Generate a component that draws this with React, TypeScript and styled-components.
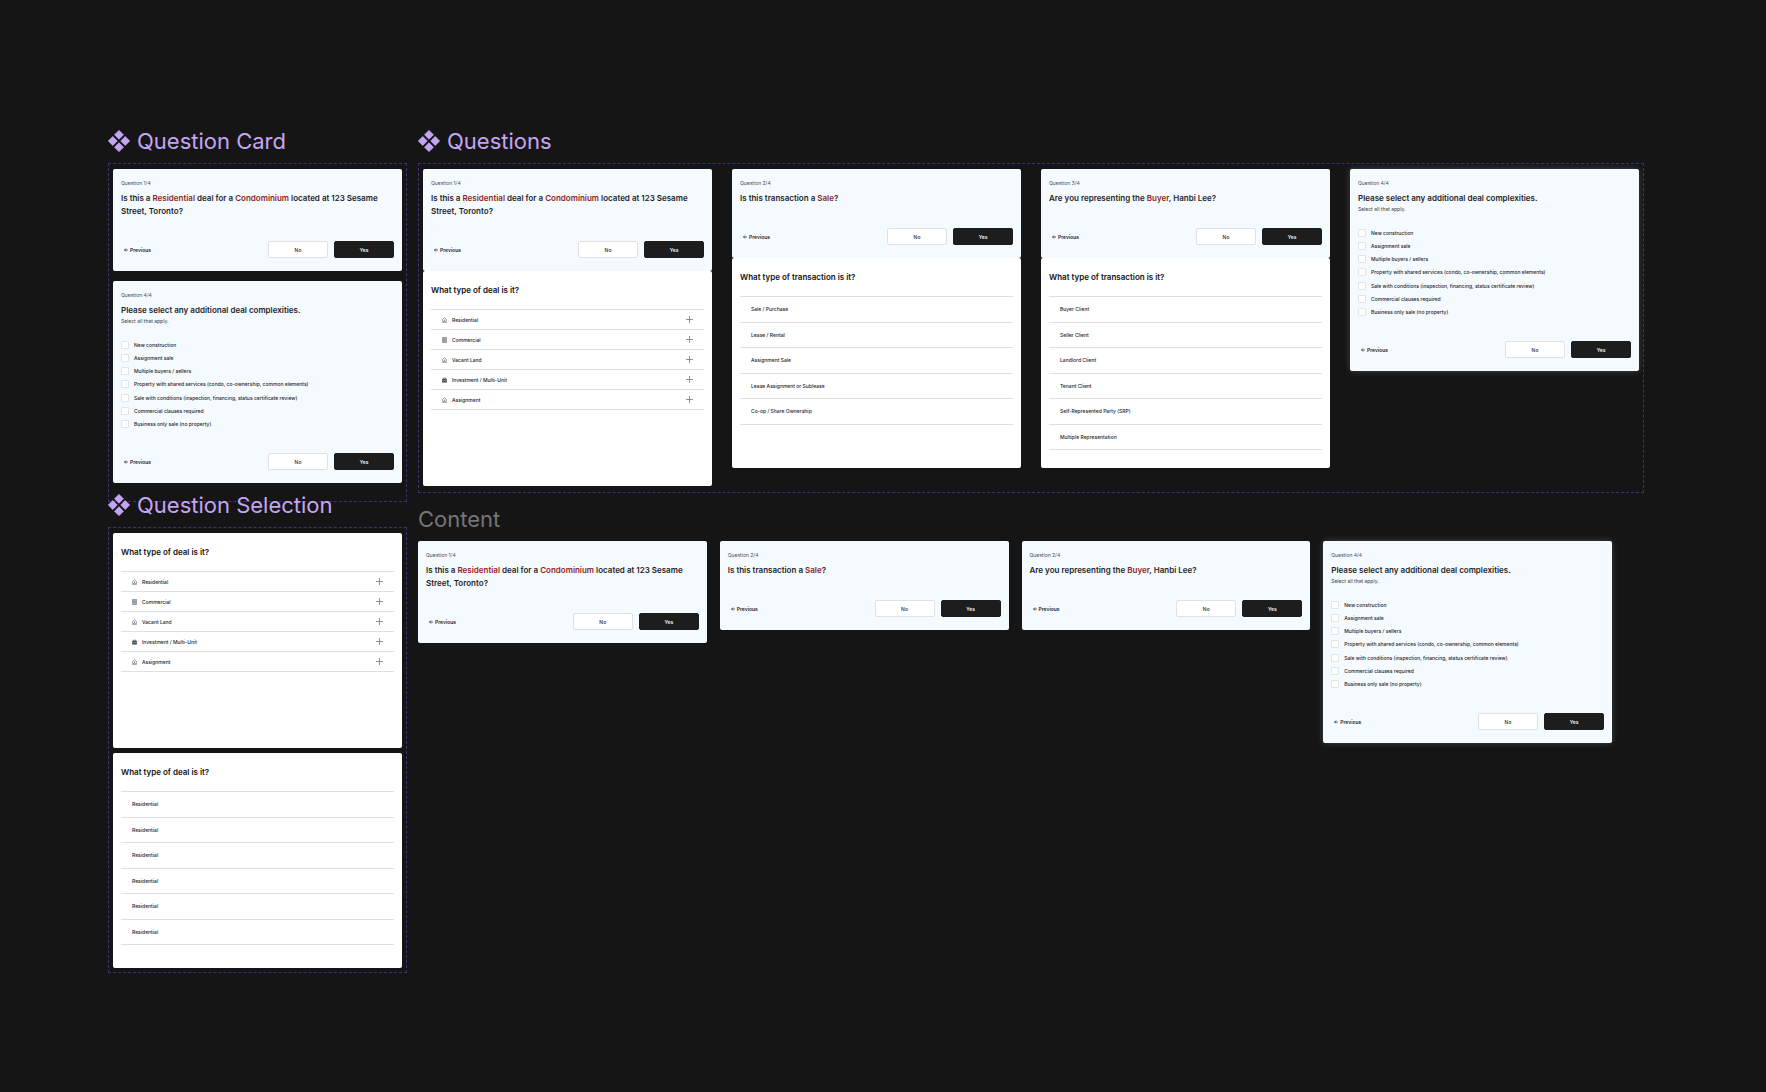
import React, { useId } from "react";
import styled, { createGlobalStyle } from "styled-components";

const GlobalStyle = createGlobalStyle`
  *, *::before, *::after { box-sizing: border-box; }
  body {
    margin: 0;
    background: #151515;
    font-family: Inter, "Liberation Sans", sans-serif;
    color: #1d1d1f;
  }
  button, input { font: inherit; color: inherit; margin: 0; }
`;

const Canvas = styled.main`
  display: grid;
  grid-template-columns: minmax(0, 299fr) minmax(0, 1226fr);
  column-gap: 11px;
  align-items: start;
  min-height: 100vh;
  padding: 127px 122px 40px 108px;
`;

const Column = styled.div`
  display: flex;
  flex-direction: column;
`;

const Section = styled.section<{ $shift?: number }>`
  margin-top: ${(p) => p.$shift ?? 0}px;
`;

const Heading = styled.h2<{ $muted?: boolean }>`
  display: flex;
  align-items: center;
  gap: 7px;
  margin: 0 0 8px;
  font-size: 22px;
  line-height: 28px;
  font-weight: 400;
  color: ${(p) => (p.$muted ? "#757575" : "#c4a5f4")};
`;

const Frame = styled.div<{ $gap: number; $bottom: number }>`
  display: flex;
  flex-direction: column;
  gap: ${(p) => p.$gap}px;
  padding: 5px 4px ${(p) => p.$bottom}px;
  border: 1px dashed #432f78;
`;

const CardGrid = styled.div<{ $gap: number; $inset?: number }>`
  display: grid;
  grid-template-columns: repeat(4, minmax(0, 1fr));
  column-gap: ${(p) => p.$gap}px;
  align-items: start;
  padding-right: ${(p) => p.$inset ?? 0}px;
`;

const Card = styled.article<{ $glow?: boolean }>`
  padding: 10px 8px 13px;
  border-radius: 2px;
  background: #f5faff;
  box-shadow: ${(p) => (p.$glow ? "0 0 6px rgba(255, 255, 255, 0.2)" : "none")};
`;

const Step = styled.p`
  margin: 0 0 5px;
  font-size: 5px;
  line-height: 8px;
  color: #4a4b50;
`;

const Title = styled.h3`
  margin: 0;
  font-size: 8px;
  line-height: 13px;
  font-weight: 600;
`;

const Accent = styled.span`
  color: #8f1d22;
`;

const Hint = styled.p`
  margin: 0;
  font-size: 5px;
  line-height: 8px;
  color: #3a3b40;
`;

const Checklist = styled.ul`
  display: grid;
  grid-auto-rows: 1fr;
  height: 93px;
  margin: 13px 0 0;
  padding: 0;
  list-style: none;
`;

const CheckItem = styled.li`
  display: flex;
  align-items: center;
  gap: 5px;
  font-size: 5px;
  line-height: 8px;
  font-weight: 500;
`;

const Checkbox = styled.input`
  appearance: none;
  width: 8px;
  height: 8px;
  border: 1px solid #e3e4e6;
  border-radius: 1px;
  background: #fff;
  &:checked { background: #1d1d1d; }
`;

const Actions = styled.div<{ $space: number }>`
  display: flex;
  align-items: center;
  gap: 6px;
  margin-top: ${(p) => p.$space}px;
`;

const Action = styled.button<{ $primary?: boolean }>`
  width: 60px;
  height: 17px;
  padding: 0;
  border: 1px solid ${(p) => (p.$primary ? "#1d1d1d" : "#e0e1e4")};
  border-radius: 2px;
  background: ${(p) => (p.$primary ? "#1d1d1d" : "#fff")};
  color: ${(p) => (p.$primary ? "#fff" : "#1d1d1f")};
  font-size: 5px;
  line-height: 8px;
  font-weight: 500;
`;

const Previous = styled.button`
  display: flex;
  align-items: center;
  gap: 2px;
  margin-right: auto;
  padding: 0 3px;
  border: 0;
  background: none;
  font-size: 5px;
  line-height: 8px;
  font-weight: 600;
`;

const Panel = styled.article<{ $height: number }>`
  min-height: ${(p) => p.$height}px;
  padding: 13px 8px 8px;
  border-radius: 2px;
  background: #fff;
`;

const PanelTitle = styled(Title)`
  margin-bottom: 13px;
  color: #101012;
`;

const Options = styled.ul<{ $rows: number; $height: number }>`
  display: grid;
  grid-template-rows: repeat(${(p) => p.$rows}, 1fr);
  height: ${(p) => p.$height}px;
  margin: 0;
  padding: 0;
  list-style: none;
`;

const Option = styled.li`
  display: flex;
  border-bottom: 1px solid #dfe0e2;
  &:first-child { box-shadow: 0 -1px #dfe0e2; }
`;

const OptionButton = styled.button`
  display: flex;
  flex: 1;
  align-items: center;
  gap: 5px;
  padding: 0 11px;
  border: 0;
  background: none;
  text-align: left;
  font-size: 5px;
  line-height: 8px;
  font-weight: 500;
`;

const OptionLabel = styled.span`
  flex: 1;
`;

const ComponentMark = () => (
  <svg width="22" height="22" viewBox="0 0 22 22" fill="#c4a5f4" aria-hidden="true">
    <path d="M11 0.4 15.4 4.8 11 9.2 6.6 4.8Z M11 12.8 15.4 17.2 11 21.6 6.6 17.2Z M4.8 6.6 9.2 11 4.8 15.4 0.4 11Z M17.2 6.6 21.6 11 17.2 15.4 12.8 11Z" stroke="#c4a5f4" strokeWidth="0.9" strokeLinejoin="round" />
  </svg>
);

const ArrowLeft = () => (
  <svg width="4" height="4" viewBox="0 0 8 8" fill="none" stroke="#1d1d1f" strokeWidth="1.4" aria-hidden="true">
    <path d="M8 4H1M4 1 1 4l3 3" />
  </svg>
);

const Plus = () => (
  <svg width="7" height="7" viewBox="0 0 7 7" stroke="#77787d" strokeWidth="0.8" aria-hidden="true">
    <path d="M3.5 0v7M0 3.5h7" />
  </svg>
);

type Glyph = "house" | "building" | "case";

const OptionIcon = ({ kind }: { kind: Glyph }) => (
  <svg width="5" height="6" viewBox="2 0 20 24" fill="none" stroke="#3c3d42" strokeWidth="2" aria-hidden="true">
    {kind === "house" && <path d="M3 11 12 3l9 8v10H3Z M9 21v-4a3 3 0 0 1 6 0v4 M10 12h4" />}
    {kind === "building" && <path d="M4 2h16v20H4Z M8 6h8v12H8Z M10 10h4M10 14h4" />}
    {kind === "case" && (
      <>
        <path d="M8 8V4h8v4" />
        <path d="M3 8h18v13H3Z" fill="#55565b" />
        <path d="M3 14h18" stroke="#fff" strokeWidth="1" />
      </>
    )}
  </svg>
);

const ComponentHeading = ({ children }: { children: React.ReactNode }) => (
  <Heading>
    <ComponentMark />
    {children}
  </Heading>
);

const complexities = [
  "New construction",
  "Assignment sale",
  "Multiple buyers / sellers",
  "Property with shared services (condo, co-ownership, common elements)",
  "Sale with conditions (inspection, financing, status certificate review)",
  "Commercial clauses required",
  "Business only sale (no property)",
];

const ActionBar = ({ space = 23 }: { space?: number }) => (
  <Actions $space={space}>
    <Previous type="button">
      <ArrowLeft />
      Previous
    </Previous>
    <Action type="button">No</Action>
    <Action type="button" $primary>
      Yes
    </Action>
  </Actions>
);

const QuestionCard = ({ step, children }: { step: string; children: React.ReactNode }) => (
  <Card>
    <Step>Question {step}</Step>
    <Title>{children}</Title>
    <ActionBar />
  </Card>
);

const DealQuestion = () => (
  <QuestionCard step="1/4">
    Is this a <Accent>Residential</Accent> deal for a <Accent>Condominium</Accent> located at 123 Sesame Street,
    Toronto?
  </QuestionCard>
);

const SaleQuestion = () => (
  <QuestionCard step="2/4">
    Is this transaction a <Accent>Sale</Accent>?
  </QuestionCard>
);

const BuyerQuestion = ({ step }: { step: string }) => (
  <QuestionCard step={step}>
    Are you representing the <Accent>Buyer</Accent>, Hanbi Lee?
  </QuestionCard>
);

const ComplexityCard = ({ glow }: { glow?: boolean }) => {
  const id = useId();
  return (
    <Card $glow={glow}>
      <Step>Question 4/4</Step>
      <Title>Please select any additional deal complexities.</Title>
      <Hint>Select all that apply.</Hint>
      <Checklist>
        {complexities.map((label, i) => (
          <CheckItem key={label}>
            <Checkbox type="checkbox" id={`${id}-${i}`} />
            <label htmlFor={`${id}-${i}`}>{label}</label>
          </CheckItem>
        ))}
      </Checklist>
      <ActionBar space={22} />
    </Card>
  );
};

const dealTypes: [string, Glyph][] = [
  ["Residential", "house"],
  ["Commercial", "building"],
  ["Vacant Land", "house"],
  ["Investment / Multi-Unit", "case"],
  ["Assignment", "house"],
];

const DealPanel = () => (
  <Panel $height={215}>
    <PanelTitle>What type of deal is it?</PanelTitle>
    <Options $rows={5} $height={100}>
      {dealTypes.map(([label, kind]) => (
        <Option key={label}>
          <OptionButton type="button">
            <OptionIcon kind={kind} />
            <OptionLabel>{label}</OptionLabel>
            <Plus />
          </OptionButton>
        </Option>
      ))}
    </Options>
  </Panel>
);

const ChoicePanel = ({ title, choices, height }: { title: string; choices: string[]; height: number }) => (
  <Panel $height={height}>
    <PanelTitle>{title}</PanelTitle>
    <Options $rows={6} $height={153}>
      {choices.map((label, i) => (
        <Option key={i}>
          <OptionButton type="button">
            <OptionLabel>{label}</OptionLabel>
          </OptionButton>
        </Option>
      ))}
    </Options>
  </Panel>
);

export default function App() {
  return (
    <>
      <GlobalStyle />
      <Canvas>
        <Column>
          <Section>
            <ComponentHeading>Question Card</ComponentHeading>
            <Frame $gap={10} $bottom={18}>
              <DealQuestion />
              <ComplexityCard />
            </Frame>
          </Section>
          <Section $shift={-11}>
            <ComponentHeading>Question Selection</ComponentHeading>
            <Frame $gap={5} $bottom={4}>
              <DealPanel />
              <ChoicePanel title="What type of deal is it?" choices={Array(6).fill("Residential")} height={215} />
            </Frame>
          </Section>
        </Column>
        <Column>
          <Section>
            <ComponentHeading>Questions</ComponentHeading>
            <Frame $gap={0} $bottom={6}>
              <CardGrid $gap={20}>
                <Column>
                  <DealQuestion />
                  <DealPanel />
                </Column>
                <Column>
                  <SaleQuestion />
                  <ChoicePanel
                    title="What type of transaction is it?"
                    choices={[
                      "Sale / Purchase",
                      "Lease / Rental",
                      "Assignment Sale",
                      "Lease Assignment or Sublease",
                      "Co-op / Share Ownership",
                    ]}
                    height={210}
                  />
                </Column>
                <Column>
                  <BuyerQuestion step="3/4" />
                  <ChoicePanel
                    title="What type of transaction is it?"
                    choices={[
                      "Buyer Client",
                      "Seller Client",
                      "Landlord Client",
                      "Tenant Client",
                      "Self-Represented Party (SRP)",
                      "Multiple Representation",
                    ]}
                    height={210}
                  />
                </Column>
                <ComplexityCard glow />
              </CardGrid>
            </Frame>
          </Section>
          <Section $shift={12}>
            <Heading $muted>Content</Heading>
            <CardGrid $gap={13} $inset={32}>
              <DealQuestion />
              <SaleQuestion />
              <BuyerQuestion step="2/4" />
              <ComplexityCard glow />
            </CardGrid>
          </Section>
        </Column>
      </Canvas>
    </>
  );
}
